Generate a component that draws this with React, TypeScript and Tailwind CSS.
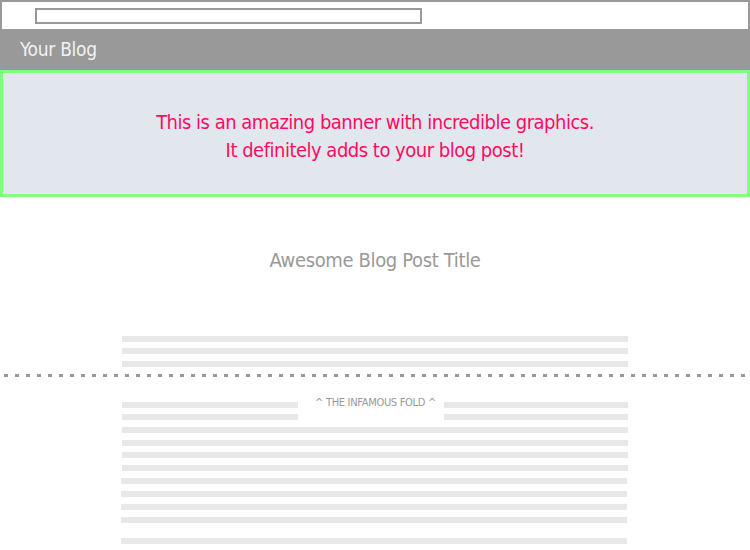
const narrow = "font-['Liberation_Sans_Narrow','DejaVu_Sans_Condensed',sans-serif]";

const Line = ({ className }: { className: string }) => (
    <div className={`h-[6px] bg-[#e8e8e8] ${className}`} />
);

export default function App() {
    return (
        <div className={`relative w-[750px] h-[550px] overflow-hidden bg-white ${narrow}`}>
            {/* fake browser chrome */}
            <div className="h-[29px] border-2 border-b-0 border-[#999] pt-[6px] pl-[33px]">
                <div className="w-[387px] h-[16px] border-2 border-[#999] bg-white" />
            </div>

            <div className="h-[41px] bg-[#999] flex items-center pl-5">
                <span className="text-[19px] leading-[24px] tracking-[-0.3px] text-[#f2f2f2] -mt-[1px]">Your Blog</span>
            </div>

            <div className="h-[127px] border-[3px] border-[#80ff80] bg-[#e2e7ee] flex items-center justify-center text-center">
                <p className="text-[20px] leading-[28px] tracking-[-0.5px] text-[#ff0a63] mt-[4px]">
                    This is an amazing banner with incredible graphics.
                    <br />
                    It definitely adds to your blog post!
                </p>
            </div>

            <h1 className="mt-[51px] text-center text-[20px] leading-[24px] tracking-[-0.35px] text-[#999]">Awesome Blog Post Title</h1>

            <div className="ml-[122px] w-[506px]">
                <Line className="mt-[64px]" />
                <Line className="mt-[6px]" />
                <Line className="mt-[7px]" />

                <div className="mt-[35px] flex">
                    <div className="w-[176px] flex flex-col gap-[6px]">
                        <Line className="" />
                        <Line className="" />
                    </div>
                    <div className="flex-1 flex justify-center pl-[9px]">
                        <span className="-mt-[5px] whitespace-nowrap text-[11px] leading-[12px] tracking-[-0.3px] text-[#999]">^ THE INFAMOUS FOLD ^</span>
                    </div>
                    <div className="w-[184px] flex flex-col gap-[6px]">
                        <Line className="" />
                        <Line className="" />
                    </div>
                </div>

                <Line className="mt-[7px]" />
                <Line className="mt-[7px]" />
                <Line className="mt-[6px]" />
                <Line className="mt-[7px]" />
            </div>

            <div className="ml-[121px] w-[506px]">
                <Line className="mt-[7px]" />
                <Line className="mt-[7px]" />
                <Line className="mt-[7px]" />
                <Line className="mt-[7px]" />
                <Line className="mt-[15px]" />
            </div>

            {/* the fold marker */}
            <div className="absolute left-[4px] right-0 top-[374px] h-[3px] bg-[repeating-linear-gradient(90deg,#999_0_4px,transparent_4px_11px)]" />
        </div>
    );
}
